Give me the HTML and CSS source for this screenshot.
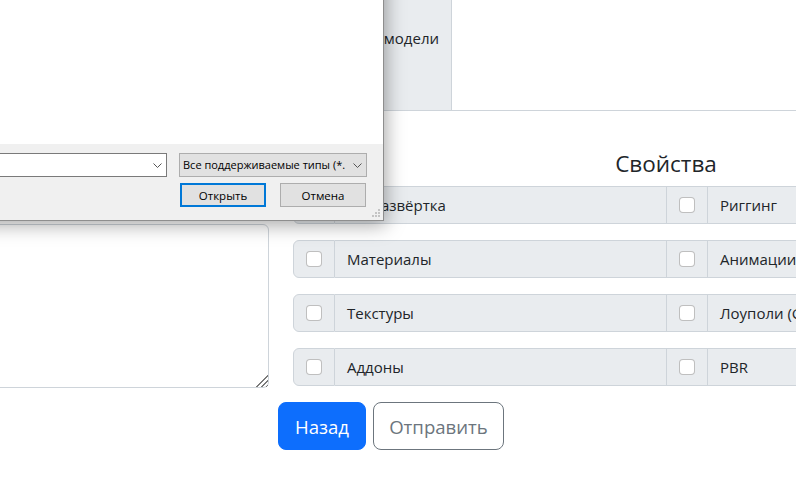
FILE: index.html
```html
<!DOCTYPE html>
<html lang="ru">
<head>
<meta charset="utf-8">
<title>Свойства</title>
<link rel="stylesheet" href="styles.css">
</head>
<body>
<div class="page">
  <div class="top">
    <div class="top-spacer"></div>
    <div class="top-label">Описание модели</div>
    <div class="top-field"></div>
  </div>
  <div class="main">
    <div class="left-col">
      <textarea class="desc"></textarea>
    </div>
    <div class="right-col">
      <h4 class="title">Свойства</h4>
      <div class="prop-row">
        <span class="cell chk"><span class="box"></span></span>
        <span class="cell lbl">UV-развёртка</span>
        <span class="cell chk"><span class="box"></span></span>
        <span class="cell lbl">Риггинг</span>
      </div>
      <div class="prop-row">
        <span class="cell chk"><span class="box"></span></span>
        <span class="cell lbl">Материалы</span>
        <span class="cell chk"><span class="box"></span></span>
        <span class="cell lbl">Анимации</span>
      </div>
      <div class="prop-row">
        <span class="cell chk"><span class="box"></span></span>
        <span class="cell lbl">Текстуры</span>
        <span class="cell chk"><span class="box"></span></span>
        <span class="cell lbl">Лоуполи (Game-ready)</span>
      </div>
      <div class="prop-row">
        <span class="cell chk"><span class="box"></span></span>
        <span class="cell lbl">Аддоны</span>
        <span class="cell chk"><span class="box"></span></span>
        <span class="cell lbl">PBR</span>
      </div>
    </div>
  </div>
  <div class="actions">
    <button class="btn btn-primary">Назад</button>
    <button class="btn btn-outline">Отправить</button>
  </div>
</div>

<div class="dialog">
  <div class="dlg-body"></div>
  <div class="dlg-footer">
    <div class="dlg-row">
      <div class="combo combo-name">
        <svg class="chev" width="9" height="5" viewBox="0 0 9 5"><polyline points="0.5,0.5 4.5,4.5 8.5,0.5" fill="none" stroke="#555" stroke-width="1"/></svg>
      </div>
      <div class="combo combo-type">
        <span class="combo-text">Все поддерживаемые типы (*.</span>
        <svg class="chev" width="9" height="5" viewBox="0 0 9 5"><polyline points="0.5,0.5 4.5,4.5 8.5,0.5" fill="none" stroke="#555" stroke-width="1"/></svg>
      </div>
    </div>
    <div class="dlg-row dlg-buttons">
      <button class="wbtn wbtn-default">Открыть</button>
      <button class="wbtn">Отмена</button>
    </div>
  </div>
  <svg class="grip" width="10" height="10" viewBox="0 0 10 10">
    <rect x="7" y="1" width="2" height="2" fill="#c4c4c4"/>
    <rect x="4" y="4" width="2" height="2" fill="#c4c4c4"/>
    <rect x="7" y="4" width="2" height="2" fill="#c4c4c4"/>
    <rect x="1" y="7" width="2" height="2" fill="#c4c4c4"/>
    <rect x="4" y="7" width="2" height="2" fill="#c4c4c4"/>
    <rect x="7" y="7" width="2" height="2" fill="#c4c4c4"/>
  </svg>
</div>
</body>
</html>
```
FILE: styles.css
```css
html, body {
  margin: 0;
  padding: 0;
  overflow: hidden;
  background: #fff;
}
body {
  font-family: "Open Sans", "Noto Sans", sans-serif;
  font-size: 15px;
  line-height: 24px;
  color: #212529;
  width: 796px;
  height: 500px;
  position: relative;
}
*, *::before, *::after { box-sizing: border-box; }

.page { width: 1100px; }

.top {
  display: flex;
  height: 111px;
}
.top-spacer { width: 300px; flex: none; }
.top-label {
  width: 152px;
  flex: none;
  background: #e9ecef;
  border-right: 1px solid #ced4da;
  border-bottom: 1px solid #ced4da;
  display: flex;
  justify-content: flex-end;
  align-items: flex-start;
  padding: 26px 12px 0 0;
  white-space: nowrap;
}
.top-field {
  flex: 1;
  border-bottom: 1px solid #ced4da;
}

.main {
  display: flex;
  gap: 24px;
}
.left-col {
  width: 269px;
  flex: none;
  padding-top: 113px;
}
.desc {
  display: block;
  width: 289px;
  height: 164px;
  margin-left: -20px;
  border: 1px solid #ced4da;
  border-radius: 6px;
  resize: vertical;
  background: #fff;
  font: inherit;
}
.desc::-webkit-resizer {
  background:
    linear-gradient(135deg, #fff 48%, transparent 48%),
    repeating-linear-gradient(135deg, transparent 0 2.2px, #7a7a7a 2.2px 3.4px);
}
.right-col {
  width: 746px;
  flex: none;
}
.title {
  margin: 38px 0 8px;
  font-size: 22.5px;
  font-weight: 400;
  line-height: 29px;
  text-align: center;
}
.prop-row {
  display: flex;
  height: 38px;
  margin-bottom: 16px;
}
.cell {
  background: #e9ecef;
  border: 1px solid #ced4da;
  display: flex;
  align-items: center;
  white-space: nowrap;
  overflow: hidden;
}
.cell + .cell { border-left: none; }
.prop-row .cell:first-child { border-radius: 6px 0 0 6px; }
.chk { width: 42px; padding: 0 12px; flex: none; }
.prop-row .chk + .lbl { width: 332px; }
.prop-row .lbl + .chk { width: 41px; padding-left: 12px; }
.lbl { padding: 0 12px; flex: none; }
.lbl:last-child { width: 332px; }
.box {
  width: 16px;
  height: 16px;
  background: #fff;
  border: 1px solid rgba(0,0,0,.25);
  border-radius: 4px;
  flex: none;
}

.actions {
  display: flex;
  padding-left: 278px;
  gap: 7px;
}
.btn {
  height: 48px;
  font-family: inherit;
  font-size: 18.6px;
  border-radius: 8px;
  border: 1px solid;
  padding: 0;
  text-align: center;
}
.btn-primary {
  width: 88px;
  background: #0d6efd;
  border-color: #0d6efd;
  color: #fff;
}
.btn-outline {
  width: 131px;
  background: #fff;
  border-color: #6c757d;
  color: #6c757d;
}

/* Windows file dialog over the page */
.dialog {
  position: absolute;
  left: -300px;
  top: -300px;
  width: 684px;
  height: 521px;
  border: 1px solid #8e8e8e;
  background: #fff;
  display: flex;
  flex-direction: column;
  box-shadow: 2px 4px 18px rgba(0,0,0,.35);
  font-family: "Open Sans", "Noto Sans", sans-serif;
  font-size: 11px;
  color: #000;
}
.dlg-body { flex: 1; background: #fff; }
.dlg-footer {
  height: 76px;
  flex: none;
  background: #f0f0f0;
  padding: 9px 16px 0 0;
}
.dlg-row {
  display: flex;
  gap: 12px;
  height: 24px;
}
.combo {
  height: 24px;
  display: flex;
  align-items: center;
  border: 1px solid #7a7a7a;
  background: #fff;
  padding: 0 4px 0 3px;
}
.combo-name { flex: 1; }
.combo-type {
  width: 188px;
  flex: none;
  background: #e1e1e1;
  border-color: #adadad;
}
.combo-text { white-space: nowrap; overflow: hidden; flex: 1; min-width: 0; }
.chev { margin-left: auto; flex: none; }
.dlg-buttons {
  margin-top: 6px;
  justify-content: flex-end;
  gap: 14px;
  padding-right: 1px;
}
.wbtn {
  width: 86px;
  height: 24px;
  background: #e1e1e1;
  border: 1px solid #adadad;
  font-family: inherit;
  font-size: 11.5px;
  color: #000;
  padding: 0;
}
.wbtn-default { border: 2px solid #0078d7; }
.grip {
  position: absolute;
  right: 2px;
  bottom: 2px;
}
```
